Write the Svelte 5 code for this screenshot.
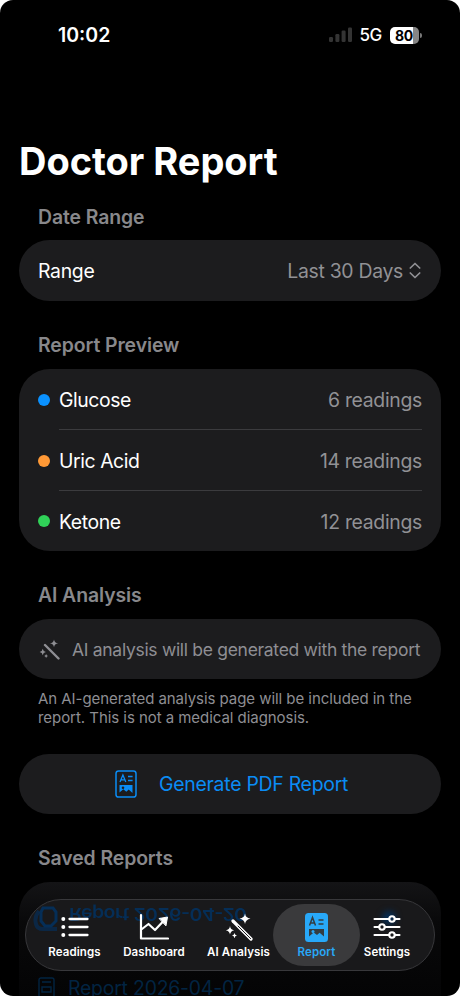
<script lang="ts">
	type TabIcon = 'list' | 'chart' | 'wand' | 'doc' | 'sliders';

	const readings = [
		{ name: 'Glucose', count: 6, color: '#0a91ff' },
		{ name: 'Uric Acid', count: 14, color: '#ff9936' },
		{ name: 'Ketone', count: 12, color: '#30d158' }
	];

	const tabs: { id: string; label: string; icon: TabIcon }[] = [
		{ id: 'readings', label: 'Readings', icon: 'list' },
		{ id: 'dashboard', label: 'Dashboard', icon: 'chart' },
		{ id: 'analysis', label: 'AI Analysis', icon: 'wand' },
		{ id: 'report', label: 'Report', icon: 'doc' },
		{ id: 'settings', label: 'Settings', icon: 'sliders' }
	];

	let activeTab = $state('report');
</script>

{#snippet wand(size: number)}
	<svg width={size} height={size} viewBox="0 0 28 28" fill="currentColor">
		<path d="M8 8l18 18" stroke="currentColor" stroke-width="3.2" stroke-linecap="round" />
		<path class="groove" d="M13 13l12.600 12.600" stroke-width="1" stroke-linecap="round" />
		<path d="M20 .5Q20.6 5 25.5 5.700Q20.600 6.400 20 11Q19.400 6.400 14.500 5.700Q19.400 5 20 .5Z" />
		<path d="M5 13Q5.500 16.700 9.200 17.300Q5.500 17.900 5 21.600Q4.500 17.900 .8 17.300Q4.500 16.700 5 13Z" />
		<path d="M9.500 20Q9.900 22.200 12 22.600Q9.900 23 9.500 25.200Q9.100 23 7 22.600Q9.100 22.200 9.500 20Z" />
	</svg>
{/snippet}

{#snippet docOutline()}
	<svg width="22" height="28" viewBox="0 0 22 28" fill="none" stroke="currentColor">
		<rect x="1" y="1" width="20" height="26" rx="2.600" stroke-width="1.500" />
		<path d="M5 12l2.900-7 2.900 7M6 9.800h3.800M13 6.500h4.600M13 10.500h4.600" stroke-width="1.300" />
		<path d="M4.500 15h13v8l-3.800-3.600-2.400 2.300-3-2.500-3.800 3.300z" fill="currentColor" stroke="none" />
		<circle cx="8" cy="17.800" r="1.300" fill="#1c1c1e" stroke="none" />
	</svg>
{/snippet}

<div class="screen">
	<header class="status">
		<span class="time">10:02</span>
		<div class="indicators">
			<svg class="signal" width="24" height="16" viewBox="0 0 24 16" fill="#343434">
				<rect x="0" y="10" width="4" height="5" rx="1.200" />
				<rect x="6.400" y="7" width="4" height="8" rx="1.200" />
				<rect x="12.600" y="3.500" width="4" height="11.500" rx="1.200" />
				<rect x="19" y="0.500" width="4" height="14.500" rx="1.200" />
			</svg>
			<span class="network">5G</span>
			<div class="battery"><span>80</span></div>
			<i class="nub"></i>
		</div>
	</header>

	<main>
		<h1>Doctor Report</h1>

		<h2 class="date-title">Date Range</h2>
		<section class="card row">
			<span class="range">Range</span>
			<span class="value picker">
				Last 30 Days
				<svg width="12" height="17" viewBox="0 0 12 17" fill="none" stroke="currentColor" stroke-width="1.700" stroke-linecap="round" stroke-linejoin="round">
					<path d="M1.300 6L6 1.500 10.700 6M1.300 11L6 15.500 10.700 11" />
				</svg>
			</span>
		</section>

		<h2>Report Preview</h2>
		<section class="card">
			{#each readings as item}
				<div class="reading">
					<i class="dot" style="background: {item.color}"></i>
					<div class="reading-body">
						<span class="name">{item.name}</span>
						<span class="value">{item.count} readings</span>
					</div>
				</div>
			{/each}
		</section>

		<h2>AI Analysis</h2>
		<section class="card ai">
			{@render wand(21)}
			<span>AI analysis will be generated with the report</span>
		</section>
		<p class="note">An AI-generated analysis page will be included in the<br />report. This is not a medical diagnosis.</p>

		<button class="card generate">
			{@render docOutline()}
			<span>Generate PDF Report</span>
		</button>

		<h2 class="saved-title">Saved Reports</h2>
		<section class="card saved">
			<div class="saved-row">
				<svg width="17" height="22" viewBox="0 0 17 22" fill="none" stroke="currentColor" stroke-width="1.400">
					<rect x="1" y="1" width="15" height="20" rx="2" />
					<path d="M4 5h9M4 10h9v5H4z" />
				</svg>
				<span>Report 2026-04-07</span>
			</div>
		</section>
	</main>

	<nav>
		<!-- the list row behind the glass, bent upside down at its rim -->
		<div class="refraction" aria-hidden="true">
			<svg width="27" height="27" viewBox="0 0 27 27" fill="none" stroke="currentColor" stroke-width="3">
				<path d="M10 3h10l3 4v9l-5 5h-6l-4-5V7z" />
				<path d="M6 6Q1 12 3 19q1 5 7 5h14" stroke-width="4" opacity="0.700" />
			</svg>
			<span>Report 2026-04-20</span>
			<i></i>
		</div>
		{#each tabs as tab (tab.id)}
			<button class="tab {tab.id}" class:active={activeTab === tab.id} onclick={() => (activeTab = tab.id)}>
				<span class="glyph">
					{#if tab.icon === 'list'}
						<svg width="28" height="22" viewBox="0 0 28 22" fill="none" stroke="currentColor" stroke-width="2.300" stroke-linecap="round">
							<path d="M8.500 3h18M8.500 11h18M8.500 19h18" />
							<path d="M2.300 3h.01M2.300 11h.01M2.300 19h.01" stroke-width="4" />
						</svg>
					{:else if tab.icon === 'chart'}
						<svg width="30" height="28" viewBox="0 0 30 28" fill="none" stroke="currentColor" stroke-width="2.200" stroke-linecap="round" stroke-linejoin="round">
							<path d="M2 2v23.500h27" />
							<path d="M3 16l6.500-5 6.500 6L24.500 8" />
							<path d="M20.500 5.500L28.500 4 27 12.500z" fill="currentColor" stroke-width="1" />
						</svg>
					{:else if tab.icon === 'wand'}
						{@render wand(28)}
					{:else if tab.icon === 'doc'}
						<svg width="23" height="29" viewBox="0 0 23 29">
							<rect width="23" height="29" rx="3.500" fill="currentColor" />
							<path d="M4.500 12.500l3-8 3 8M5.500 10h4M13.500 7h5M13.500 11h5" fill="none" stroke="#333c42" stroke-width="1.500" />
							<path d="M4 16h15v7.500l-4.400-3.800-2.600 2.300-3.300-2.400L4 23.500z" fill="#333c42" />
							<circle cx="8" cy="18.500" r="1.500" fill="currentColor" />
						</svg>
					{:else}
						<svg width="28" height="24" viewBox="0 0 28 24" fill="none" stroke="currentColor" stroke-width="2.100" stroke-linecap="round">
							<path d="M1.500 4H16M22 4h4.500M1.500 12H6M12 12h14.500M1.500 20H16M22 20h4.500" />
							<circle cx="19" cy="4" r="2.700" />
							<circle cx="9" cy="12" r="2.700" />
							<circle cx="19" cy="20" r="2.700" />
						</svg>
					{/if}
				</span>
				<span class="label">{tab.label}</span>
			</button>
		{/each}
	</nav>
</div>

<style>
	:global(body) {
		background: #fff;
	}

	.screen {
		position: relative;
		box-sizing: border-box;
		width: 460px;
		height: 996px;
		overflow: hidden;
		border-radius: 13px;
		background: #000;
		color: #fff;
		font-family: Inter, sans-serif;
		font-size: 19.4px;
		letter-spacing: -0.3px;
	}

	button {
		border: 0;
		font: inherit;
		letter-spacing: inherit;
		cursor: pointer;
	}

	svg {
		display: block;
		flex: none;
	}

	.status {
		display: flex;
		align-items: center;
		justify-content: space-between;
		height: 70px;
		padding: 0 38px 0 58px;
		box-sizing: border-box;
	}

	.time {
		font-weight: 600;
		font-size: 19.5px;
		letter-spacing: 0;
	}

	.indicators {
		display: flex;
		align-items: center;
	}

	.network {
		margin: 0 8px 0 6px;
		font-weight: 500;
		font-size: 17px;
	}

	.battery {
		width: 29px;
		height: 17px;
		border-radius: 5px;
		background: linear-gradient(90deg, #fff 80%, #858585 80%);
		color: #000;
		font-size: 14px;
		font-weight: 700;
		line-height: 17px;
		text-align: center;
	}

	.battery span {
		margin-right: 1px;
	}

	.nub {
		width: 2px;
		height: 5px;
		margin-left: 1px;
		border-radius: 0 2px 2px 0;
		background: #777;
	}

	main {
		padding: 0 19px;
	}

	h1 {
		margin: 66px 0 0;
		font-size: 38px;
		font-weight: 700;
		line-height: 50px;
		letter-spacing: -0.02px;
	}

	h2 {
		margin: 32px 0 12px;
		padding-left: 19px;
		color: #88888b;
		font-size: 19.4px;
		font-weight: 600;
		line-height: 24px;
		letter-spacing: -0.08px;
	}

	.date-title {
		margin: 19px 0 11px;
	}

	.card {
		box-sizing: border-box;
		width: 100%;
		border-radius: 31px;
		background: #1c1c1e;
	}

	.row {
		display: flex;
		align-items: center;
		justify-content: space-between;
		height: 61px;
		padding: 0 20px 0 19px;
	}

	.value {
		color: #919195;
	}

	.picker {
		display: flex;
		align-items: center;
		gap: 6px;
	}

	.reading {
		display: flex;
		align-items: center;
		height: 61px;
		padding: 0 19px 0 18px;
	}

	.reading:last-child {
		height: 60px;
	}

	.dot {
		width: 12px;
		height: 12px;
		margin: 0 9px 0 1px;
		border-radius: 50%;
	}

	.reading-body {
		display: flex;
		flex: 1;
		align-items: center;
		justify-content: space-between;
		box-sizing: border-box;
		height: 100%;
		padding-top: 1px;
		border-bottom: 1px solid #3b3b3e;
	}

	.reading:last-child .reading-body {
		border-bottom: 0;
	}

	.name {
		letter-spacing: -0.42px;
	}

	.ai {
		display: flex;
		align-items: center;
		gap: 12px;
		height: 60px;
		padding-left: 20px;
		color: #8e8e93;
		font-size: 17.5px;
		letter-spacing: -0.3px;
		white-space: nowrap;
	}

	.groove {
		stroke: #1c1c1e;
	}

	.ai .groove {
		stroke: none;
	}

	.note {
		margin: 10px 0 27px;
		padding-left: 19px;
		color: #8e8e93;
		font-size: 15px;
		line-height: 19px;
		letter-spacing: -0.05px;
		white-space: nowrap;
	}

	.generate {
		display: flex;
		align-items: center;
		height: 60px;
		padding: 0 0 0 96px;
		color: #0a8cf5;
	}

	.generate span {
		margin-left: 22px;
		letter-spacing: -0.25px;
	}

	.saved {
		height: 160px;
		padding: 94px 19px 0;
		background: linear-gradient(#141416, #09090a 40px, #040405 115px);
		color: #022442;
	}

	.saved-row {
		display: flex;
		align-items: center;
		gap: 13px;
		letter-spacing: -0.2px;
	}

	nav {
		position: absolute;
		left: 25px;
		bottom: 25px;
		display: flex;
		box-sizing: border-box;
		width: 410px;
		height: 72px;
		padding: 4px;
		overflow: hidden;
		border: 1px solid #38383b;
		border-radius: 36px;
		background: #19191b;
	}

	.refraction {
		position: absolute;
		top: 5px;
		left: 7px;
		display: flex;
		width: 400px;
		color: #052e57;
	}

	.refraction span {
		margin-left: 9px;
		font-weight: 600;
		line-height: 18px;
		height: 18px;
		letter-spacing: -0.45px;
		white-space: nowrap;
		transform: scaleY(-0.9);
	}

	.refraction i {
		width: 14px;
		height: 14px;
		margin: 6px 0 0 136px;
		border-radius: 50%;
		background: #052e57;
		filter: blur(3px);
	}

	.tab {
		position: relative;
		display: flex;
		flex: none;
		flex-direction: column;
		align-items: center;
		box-sizing: border-box;
		height: 62px;
		padding: 0;
		border-radius: 31px;
		background: transparent;
		color: #fff;
	}

	.readings {
		width: 89px;
	}

	.dashboard {
		width: 70px;
	}

	/* label sits close to the selected pill */
	.analysis {
		width: 84px;
		padding-left: 15px;
	}

	.report {
		width: 87px;
	}

	.settings {
		width: 54px;
	}

	.tab.active {
		background: #3a3a3c;
		color: #28a8f8;
	}

	.glyph {
		display: flex;
		align-items: center;
		justify-content: center;
		height: 30px;
		margin-top: 8px;
	}

	.label {
		margin-top: 3px;
		font-size: 11.5px;
		font-weight: 600;
		line-height: 15px;
		letter-spacing: 0.1px;
		white-space: nowrap;
	}
</style>
